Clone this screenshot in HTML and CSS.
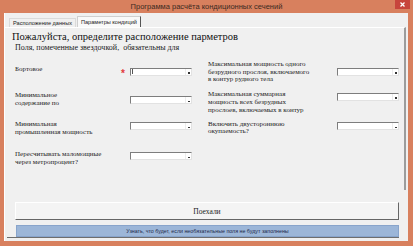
FILE: index.html
```html
<!DOCTYPE html>
<html lang="ru">
<head>
    <meta charset="UTF-8">
    <title>Программа расчёта кондиционных сечений</title>
    <link rel="stylesheet" href="styles.css">
</head>
<body>
<div class="window">

    <!-- Title bar -->
    <div class="titlebar">
        <span class="title">Программа расчёта кондиционных сечений</span>
        <span class="close">
            <svg width="5" height="5" viewBox="0 0 5 5"><path d="M0.5 0.5 L4.5 4.5 M4.5 0.5 L0.5 4.5" stroke="#fff" stroke-width="1.3"/></svg>
        </span>
    </div>

    <div class="client">
        <!-- Tabs -->
        <div class="tabs">
            <div class="tab">Расположение данных</div>
            <div class="tab active">Параметры кондиций</div>
        </div>

        <!-- Tab page -->
        <div class="page">
            <h1>Пожалуйста, определите расположение парметров</h1>
            <p class="note">Поля, помеченные звездочкой,&nbsp; обязательны для</p>

            <div class="form">
                <div class="col col-left">
                    <div class="field">
                        <label>Бортовое</label>
                        <span class="star">*</span>
                        <div class="combo"><span class="caret"></span><span class="btn"></span></div>
                    </div>
                    <div class="field">
                        <label>Минимальное<br>содержание по</label>
                        <div class="combo drop4"><span class="btn"></span></div>
                    </div>
                    <div class="field">
                        <label>Минимальная<br>промышленная мощность</label>
                        <div class="combo"><span class="btn"></span></div>
                    </div>
                    <div class="field">
                        <label>Пересчитывать маломощные<br>через метропроцент?</label>
                        <div class="combo"><span class="btn"></span></div>
                    </div>
                </div>

                <div class="col col-right">
                    <div class="field">
                        <label>Максимальная мощность одного<br>безрудного прослоя, включаемого<br>в контур рудного тела</label>
                        <div class="combo drop6"><span class="btn"></span></div>
                    </div>
                    <div class="field">
                        <label>Максимальная суммарная<br>мощность всех безрудных<br>прослоев, включаемых в контур</label>
                        <div class="combo"><span class="btn"></span></div>
                    </div>
                    <div class="field">
                        <label>Включить двустороннюю<br>окупаемость?</label>
                        <div class="combo"><span class="btn"></span></div>
                    </div>
                </div>
            </div>
        </div>

        <!-- Buttons -->
        <div class="go">Поехали</div>
        <div class="footer">
            <div class="hint">Узнать, что будет, если необязательные поля не будут заполнены</div>
        </div>
    </div>
</div>
</body>
</html>
```

FILE: styles.css
```css
body {
    margin: 0;
    font-family: "Liberation Serif", serif;
    background-color: #d8805e;
}

/* Window frame */
.window {
    width: 413px;
    height: 246px;
    box-sizing: border-box;
    background: #d8805e;
    padding: 0 5px 5px 4px;
    display: flex;
    flex-direction: column;
}

.titlebar {
    height: 13px;
    position: relative;
    display: flex;
    justify-content: center;
    align-items: center;
}

.title {
    font: 7.5px "Liberation Sans", sans-serif;
    color: #3b2a22;
    margin-left: 1px;
}

.close {
    position: absolute;
    right: -2px;
    top: 0;
    width: 15px;
    height: 9px;
    background: #c7453c;
    display: flex;
    align-items: center;
    justify-content: center;
}

.client {
    flex: 1;
    background: #f0f0f0;
    border-left: 1px solid #fff;
    display: flex;
    flex-direction: column;
}

/* Tabs */
.tabs {
    height: 14px;
    box-sizing: border-box;
    display: flex;
    align-items: flex-end;
    padding: 4px 0 0 4px;
}

.tab {
    height: 8px;
    padding: 0 3px;
    font: 5.6px "Liberation Sans", sans-serif;
    line-height: 8px;
    color: #222;
    border: 1px solid #dadada;
    border-bottom: none;
    background: #f0f0f0;
}

.tab.active {
    height: 10px;
    line-height: 10px;
    margin-left: 1px;
    background: #f9f9f9;
    border-color: #cfcfcf;
    border-right: 1px solid #555;
}

/* Tab page */
.page {
    height: 163px;
    box-sizing: border-box;
    margin-right: 2px;
    padding: 3px 0 0 7px;
    border-top: 1px solid #fff;
    border-right: 2px solid #9c9c9c;
}

.page h1 {
    margin: 0;
    font-size: 10.5px;
    line-height: 12px;
    font-weight: normal;
    color: #111;
}

.note {
    margin: 0 0 0 3px;
    font-size: 8px;
    line-height: 10px;
    color: #222;
}

/* Form */
.form {
    display: flex;
    gap: 16px;
    margin: 8px 0 0 3px;
}

.col {
    display: grid;
}

.col-left {
    width: 177px;
    padding-top: 5.4px;
    grid-template-rows: 26px 28.5px 30px auto;
}

.col-right {
    width: 191px;
    grid-template-rows: 30.3px 29.4px auto;
}

.field {
    display: flex;
    align-items: flex-start;
}

.field label {
    font-size: 7px;
    line-height: 7.7px;
    color: #1e1e1e;
}

.star {
    margin: 3px 0 0 auto;
    font: bold 10px "Liberation Sans", sans-serif;
    line-height: 9px;
    color: #e2383a;
}

.combo {
    margin-left: auto;
    margin-top: 1.5px;
    width: 62px;
    height: 8px;
    box-sizing: border-box;
    background: #fff;
    border: 1px solid;
    border-color: #7d7d7d #e2e2e2 #e2e2e2 #7d7d7d;
    display: flex;
}

.star + .combo {
    margin-left: 5px;
}

.combo.drop4 { margin-top: 4px; }
.combo.drop6 { margin-top: 6.6px; }

.caret {
    width: 1px;
    height: 5px;
    margin: 0.5px 0 0 1px;
    background: #555;
}

.combo .btn {
    margin-left: auto;
    width: 6px;
    border-left: 1px solid #ececec;
    display: flex;
    align-items: flex-end;
    justify-content: center;
    padding-bottom: 1px;
    box-sizing: border-box;
}

.combo .btn::after {
    content: "";
    width: 2px;
    height: 1.5px;
    background: #333;
}

/* Buttons */
.go {
    margin: 12px 9px 0 10px;
    height: 18px;
    box-sizing: border-box;
    border: 1px solid;
    border-color: #fff #666 #666 #fff;
    background: #f4f4f4;
    display: flex;
    align-items: center;
    justify-content: center;
    font-size: 7.5px;
    color: #222;
}

.footer {
    margin: 5px 9px 0 2px;
    padding-left: 9px;
    border-bottom: 1px solid #6e6e6e;
}

.hint {
    height: 12px;
    box-sizing: border-box;
    background: #9cb6d8;
    border: 1px solid #88a4cb;
    display: flex;
    align-items: center;
    justify-content: center;
    font: 5.3px "Liberation Sans", sans-serif;
    color: #1c2a4a;
}
```
